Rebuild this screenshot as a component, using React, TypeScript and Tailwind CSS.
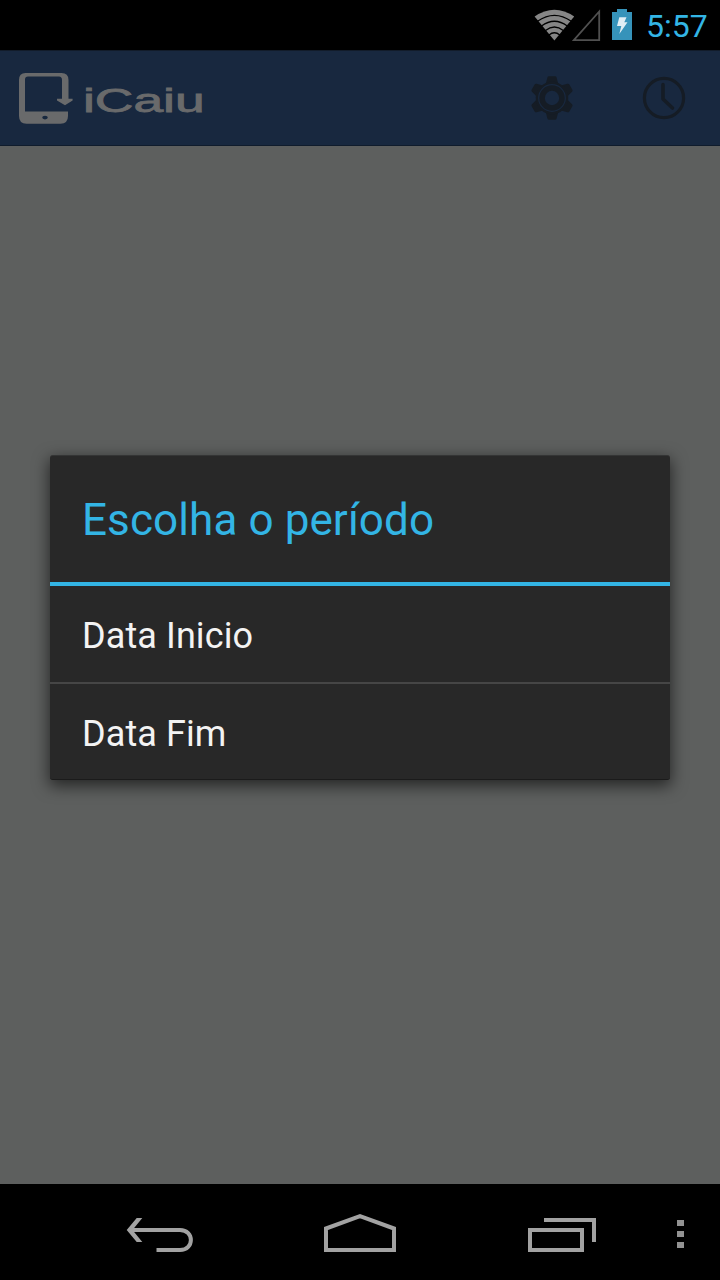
const periodOptions = ['Data Inicio', 'Data Fim']

const StatusBar = () => (
  <header className="flex h-[50px] shrink-0 items-center bg-black pl-[534px]">
    <svg width="104" height="50" viewBox="534 0 104 50" className="shrink-0">
      {/* Wifi */}
      <path d="M554.4 40.5 L534.6 16.5 Q554.4 3 574.2 16.5 Z" fill="#868686" />
      <g fill="none" stroke="#000" strokeWidth="1.3">
        <path d="M537.5 21.3 Q554.4 9.5 571.3 21.3" />
        <path d="M541.5 26 Q554.4 16.5 567.3 26" />
        <path d="M545.5 30.5 Q554.4 23.5 563.3 30.5" />
        <path d="M549 35 Q554.4 30.5 559.8 35" />
      </g>
      {/* Signal */}
      <path d="M599.2 11.5 V40.2 H573.8 Z" fill="none" stroke="#505050" strokeWidth="1.8" />
      {/* Battery */}
      <path d="M617 9 H627 V12 H632 V40 H612 V12 H617 Z" fill="#3693ba" />
      <path d="M619.3 17.3 H626.5 L624.3 22.2 H627.5 L619.3 34 L621.3 26 H617 Z" fill="#e0eef5" />
    </svg>
    <span className="ml-[8px] mt-px font-['Roboto',sans-serif] text-[32px] leading-[38px] text-[#33b5e5]">
      5:57
    </span>
  </header>
)

const Logo = () => (
  <div className="flex h-full items-center">
    <svg width="56" height="94" viewBox="18 51 56 94" className="shrink-0">
      <path
        fillRule="evenodd"
        fill="#696a6b"
        d="M25.5 73 H61.5 Q68.5 73 68.5 80 V98.8 H72.6 V100.5 L65 105.3 L57 100.5 V98.8 H62 V80 Q62 76.5 59 76.5 H28 Q25 76.5 25 79.5 V111.5 H68 V116 Q68 123.7 60.5 123.7 H26.5 Q19 123.7 19 116 V80 Q19 73 25.5 73 Z"
      />
      <ellipse cx="45" cy="117.6" rx="2.8" ry="1.8" fill="#17283f" />
    </svg>
    <span className="ml-[9px] mt-[4px] origin-left scale-x-[1.57] font-['Liberation_Sans',Arial,sans-serif] text-[34px] leading-[40px] text-[#696a6b] [-webkit-text-stroke:0.8px_#696a6b]">
      iCaiu
    </span>
  </div>
)

const teeth = [0, 60, 120, 180, 240, 300]

const AppBar = () => (
  <div className="flex h-24 shrink-0 items-center justify-between border-t border-b border-t-[#121c2a] border-b-[#101c2c] bg-[#18283f] pl-[18px] pr-[34px]">
    <Logo />
    <div className="flex items-center gap-[68px]">
      <button aria-label="Configurações">
        <svg width="44" height="46" viewBox="-22 -23 44 46" fill="#151c25">
          {teeth.map((angle) => (
            <path key={angle} d="M-6.3 -14 L-4.6 -20.500 Q-4.300 -21.800 -3 -21.800 H3 Q4.300 -21.800 4.600 -20.500 L6.300 -14 Z" transform={`rotate(${angle})`} />
          ))}
          <circle r="16.3" />
          <circle r="13.3" fill="none" stroke="#18283f" strokeWidth="1.2" />
          <circle r="7.2" fill="#18283f" />
        </svg>
      </button>
      <button aria-label="Histórico">
        <svg width="44" height="46" viewBox="-22 -23 44 46" fill="none" stroke="#151c25">
          <circle r="19.6" strokeWidth="3.2" />
          <path d="M-1 -13.5 V1 L8.5 10" strokeWidth="3.6" strokeLinecap="round" strokeLinejoin="round" />
        </svg>
      </button>
    </div>
  </div>
)

const PeriodDialog = () => (
  <div
    role="dialog"
    aria-labelledby="period-title"
    className="absolute left-[50px] top-[455px] flex h-[325px] w-[620px] flex-col rounded-[3px] border-t border-b border-t-[#343535] border-b-[#1b1b1b] bg-[#282828] font-['Roboto',sans-serif] shadow-[0_5px_16px_1px_rgba(0,0,0,0.6)]"
  >
    <div className="flex h-[130px] shrink-0 items-center border-b-4 border-[#33b5e5] pl-8">
      <h2 id="period-title" className="mt-[2px] text-[44px] leading-[52px] tracking-[0.1px] text-[#33b5e5]">
        Escolha o período
      </h2>
    </div>
    <ul className="divide-y-2 divide-[#464646] text-[36px] leading-[42px] tracking-[0.1px] text-[#f3f3f3]">
      {periodOptions.map((option) => (
        <li key={option} className="flex h-[98px] pt-[29px] pl-8 last:h-[95px]">
          {option}
        </li>
      ))}
    </ul>
  </div>
)

const NavigationBar = () => (
  <nav className="flex h-24 shrink-0 items-center bg-black pl-[124px]">
    <button aria-label="Voltar">
      <svg width="72" height="48" viewBox="124 1208 72 48" fill="none" stroke="#a2a2a2" strokeWidth="4">
        <path d="M129 1230 H180 C194.500 1230 194.500 1250 180 1250 H156.500" />
        <path d="M142.300 1218 H136.700 L126.700 1230 L136.700 1242 H142.300 L132.500 1230 Z" fill="#a2a2a2" stroke="none" />
      </svg>
    </button>
    <button aria-label="Início" className="ml-[124px]">
      <svg width="80" height="48" viewBox="320 1208 80 48" fill="none" stroke="#a2a2a2" strokeWidth="4">
        <path d="M326 1250 V1228.500 L360 1216.200 L394 1228.500 V1250 Z" />
      </svg>
    </button>
    <button aria-label="Recentes" className="ml-[124px]">
      <svg width="80" height="48" viewBox="524 1208 80 48" fill="none" stroke="#a2a2a2" strokeWidth="4">
        <path d="M530 1230 H582 V1250 H530 Z M544 1220 H594 V1242" />
      </svg>
    </button>
    <button aria-label="Mais opções" className="ml-[73px] mt-[3px] flex flex-col gap-[5px]">
      <span className="h-[6px] w-[7px] bg-[#929292]" />
      <span className="h-[6px] w-[7px] bg-[#929292]" />
      <span className="h-[6px] w-[7px] bg-[#929292]" />
    </button>
  </nav>
)

const App = () => {
  return (
    <div className="relative flex h-[1280px] w-[720px] flex-col overflow-hidden bg-black">
      <StatusBar />
      <AppBar />
      <main className="flex-1 bg-[#5d5f5e]" />
      <NavigationBar />
      <PeriodDialog />
    </div>
  )
}

export default App
